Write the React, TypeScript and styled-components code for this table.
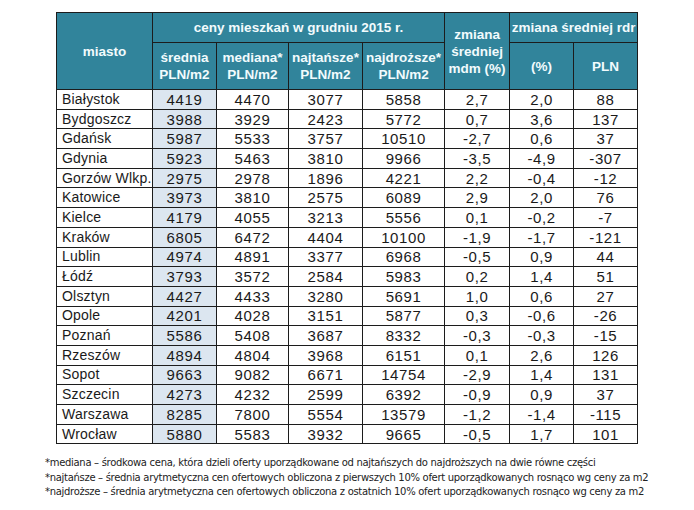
import React from "react";
import styled, { createGlobalStyle } from "styled-components";

const Global = createGlobalStyle`
  html, body { margin: 0; padding: 0; background: #ffffff; }
  body { font-family: "Liberation Sans", Arial, sans-serif; color: #1a1a1a; }
`;

const Page = styled.div`
  width: 694px;
  height: 510px;
  padding: 12px 0 0 56px;
  box-sizing: border-box;
  overflow: hidden;
`;

const Table = styled.table`
  border-collapse: collapse;
  table-layout: fixed;
  width: 581px;
`;

const HeadCell = styled.th<{ $h?: number }>`
  background: #31849b;
  color: #f2fbfd;
  font-weight: bold;
  font-size: 13.5px;
  line-height: 17px;
  border: 1px solid #1c1c1c;
  text-align: center;
  vertical-align: middle;
  padding: 0;
  height: ${(p) => (p.$h ? `${p.$h}px` : "auto")};
  box-sizing: border-box;
`;

const Row = styled.tr`
  height: 19.7px;
`;

const CityCell = styled.td`
  border: 1px solid #1c1c1c;
  padding: 0 0 0 5px;
  font-size: 14px;
  line-height: 15px;
  letter-spacing: 0.2px;
  text-align: left;
  white-space: nowrap;
`;

const NumCell = styled.td<{ $shade?: boolean }>`
  border: 1px solid #1c1c1c;
  padding: 0;
  font-size: 15px;
  line-height: 15px;
  text-align: center;
  letter-spacing: 0.6px;
  background: ${(p) => (p.$shade ? "#dce6f0" : "#ffffff")};
`;

const Notes = styled.div`
  margin: 12px 0 0 -11px;
  font-family: "DejaVu Sans", Verdana, sans-serif;
  font-size: 10px;
  line-height: 14.2px;
  color: #222;
  letter-spacing: -0.3px;
  white-space: nowrap;
`;

const data: [string, string, string, string, string, string, string, string][] = [
  ["Białystok", "4419", "4470", "3077", "5858", "2,7", "2,0", "88"],
  ["Bydgoszcz", "3988", "3929", "2423", "5772", "0,7", "3,6", "137"],
  ["Gdańsk", "5987", "5533", "3757", "10510", "-2,7", "0,6", "37"],
  ["Gdynia", "5923", "5463", "3810", "9966", "-3,5", "-4,9", "-307"],
  ["Gorzów Wlkp.", "2975", "2978", "1896", "4221", "2,2", "-0,4", "-12"],
  ["Katowice", "3973", "3810", "2575", "6089", "2,9", "2,0", "76"],
  ["Kielce", "4179", "4055", "3213", "5556", "0,1", "-0,2", "-7"],
  ["Kraków", "6805", "6472", "4404", "10100", "-1,9", "-1,7", "-121"],
  ["Lublin", "4974", "4891", "3377", "6968", "-0,5", "0,9", "44"],
  ["Łódź", "3793", "3572", "2584", "5983", "0,2", "1,4", "51"],
  ["Olsztyn", "4427", "4433", "3280", "5691", "1,0", "0,6", "27"],
  ["Opole", "4201", "4028", "3151", "5877", "0,3", "-0,6", "-26"],
  ["Poznań", "5586", "5408", "3687", "8332", "-0,3", "-0,3", "-15"],
  ["Rzeszów", "4894", "4804", "3968", "6151", "0,1", "2,6", "126"],
  ["Sopot", "9663", "9082", "6671", "14754", "-2,9", "1,4", "131"],
  ["Szczecin", "4273", "4232", "2599", "6392", "-0,9", "0,9", "37"],
  ["Warszawa", "8285", "7800", "5554", "13579", "-1,2", "-1,4", "-115"],
  ["Wrocław", "5880", "5583", "3932", "9665", "-0,5", "1,7", "101"],
];

const widths = [96, 64, 72, 74, 82, 65, 64, 64];

export default function App() {
  return (
    <Page>
      <Global />
      <Table>
        <colgroup>
          {widths.map((w, i) => (
            <col key={i} style={{ width: w }} />
          ))}
        </colgroup>
        <thead>
          <tr>
            <HeadCell rowSpan={2}>miasto</HeadCell>
            <HeadCell colSpan={4} $h={30}>ceny mieszkań w grudniu 2015 r.</HeadCell>
            <HeadCell rowSpan={2}>
              zmiana
              <br />
              średniej
              <br />
              mdm (%)
            </HeadCell>
            <HeadCell colSpan={2}>zmiana średniej rdr</HeadCell>
          </tr>
          <tr>
            <HeadCell $h={47}>
              średnia
              <br />
              PLN/m2
            </HeadCell>
            <HeadCell>
              mediana*
              <br />
              PLN/m2
            </HeadCell>
            <HeadCell>
              najtańsze*
              <br />
              PLN/m2
            </HeadCell>
            <HeadCell>
              najdroższe*
              <br />
              PLN/m2
            </HeadCell>
            <HeadCell>(%)</HeadCell>
            <HeadCell>PLN</HeadCell>
          </tr>
        </thead>
        <tbody>
          {data.map((r) => (
            <Row key={r[0]}>
              <CityCell>{r[0]}</CityCell>
              {r.slice(1).map((v, i) => (
                <NumCell key={i} $shade={i === 0}>
                  {v}
                </NumCell>
              ))}
            </Row>
          ))}
        </tbody>
      </Table>
      <Notes>
        *mediana – środkowa cena, która dzieli oferty uporządkowane od najtańszych do najdroższych na dwie równe części
        <br />
        *najtańsze – średnia arytmetyczna cen ofertowych obliczona z pierwszych 10% ofert uporządkowanych rosnąco wg ceny za m2
        <br />
        *najdroższe – średnia arytmetyczna cen ofertowych obliczona z ostatnich 10% ofert uporządkowanych rosnąco wg ceny za m2
      </Notes>
    </Page>
  );
}
